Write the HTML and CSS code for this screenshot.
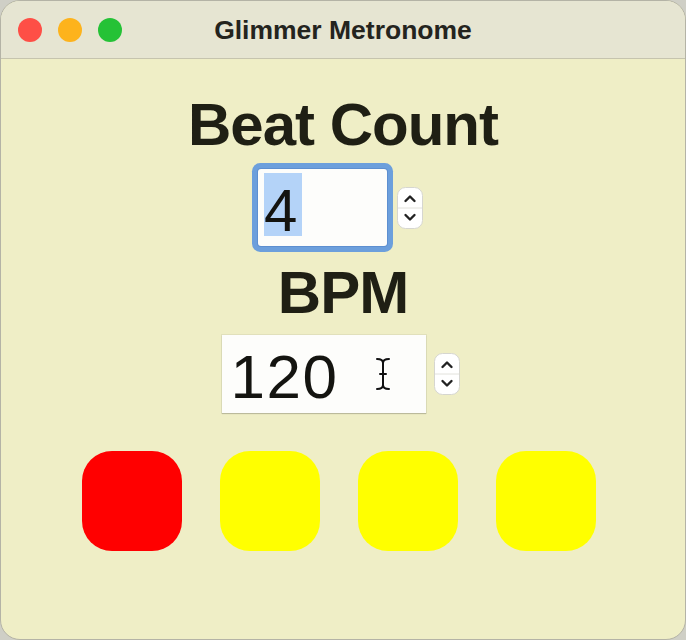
FILE: index.html
```html
<!DOCTYPE html>
<html>
<head>
<meta charset="utf-8">
<title>Glimmer Metronome</title>
<link rel="stylesheet" href="styles.css">
</head>
<body>
<div class="window">
  <div class="titlebar">
    <div class="lights">
      <span class="light red"></span>
      <span class="light yellow"></span>
      <span class="light green"></span>
    </div>
    <div class="title">Glimmer Metronome</div>
  </div>
  <div class="content">
    <h1 class="heading">Beat Count</h1>
    <div class="spin-row row-beats">
      <div class="field field-beats focused"><span class="value selected">4</span></div>
      <svg class="stepper" width="26" height="42" viewBox="0 0 26 42">
        <rect x="0.5" y="0.5" width="25" height="41" rx="8" fill="#fff" stroke="#d6d6d0"/>
        <line x1="1" y1="21" x2="25" y2="21" stroke="#e2e2dc"/>
        <polyline points="8.5,14 13,9.5 17.5,14" fill="none" stroke="#222" stroke-width="2.4" stroke-linecap="round" stroke-linejoin="round"/>
        <polyline points="8.5,28 13,32.5 17.5,28" fill="none" stroke="#222" stroke-width="2.4" stroke-linecap="round" stroke-linejoin="round"/>
      </svg>
    </div>
    <h1 class="heading bpm">BPM</h1>
    <div class="spin-row row-bpm">
      <div class="field field-bpm"><span class="value wide">120</span>
        <svg class="ibeam" width="16" height="34" viewBox="0 0 16 34">
          <path d="M2 2 C6 2 8 3 8 6 C8 3 10 2 14 2 M8 6 L8 28 M5 17 L11 17 M2 32 C6 32 8 31 8 28 C8 31 10 32 14 32" fill="none" stroke="#fff" stroke-width="4" stroke-linecap="round"/>
          <path d="M2 2 C6 2 8 3 8 6 C8 3 10 2 14 2 M8 6 L8 28 M5 17 L11 17 M2 32 C6 32 8 31 8 28 C8 31 10 32 14 32" fill="none" stroke="#111" stroke-width="2" stroke-linecap="round"/>
        </svg>
      </div>
      <svg class="stepper" width="26" height="42" viewBox="0 0 26 42">
        <rect x="0.5" y="0.5" width="25" height="41" rx="8" fill="#fff" stroke="#d6d6d0"/>
        <line x1="1" y1="21" x2="25" y2="21" stroke="#e2e2dc"/>
        <polyline points="8.5,14 13,9.5 17.5,14" fill="none" stroke="#222" stroke-width="2.4" stroke-linecap="round" stroke-linejoin="round"/>
        <polyline points="8.5,28 13,32.5 17.5,28" fill="none" stroke="#222" stroke-width="2.4" stroke-linecap="round" stroke-linejoin="round"/>
      </svg>
    </div>
    <div class="beats">
      <div class="beat on"></div>
      <div class="beat"></div>
      <div class="beat"></div>
      <div class="beat"></div>
    </div>
  </div>
</div>
</body>
</html>
```

FILE: styles.css
```css
html, body {
  margin: 0;
  padding: 0;
  background: #cfcfc6;
}

.window {
  box-sizing: border-box;
  width: 686px;
  height: 640px;
  border: 1px solid #b4b3a6;
  border-radius: 20px;
  overflow: hidden;
  background: #efeec6;
  font-family: "Liberation Sans", Arial, sans-serif;
}

.titlebar {
  height: 57px;
  border-bottom: 1px solid #c6c4ae;
  background: #e6e5d2;
  display: grid;
  align-items: center;
}

.lights,
.title {
  grid-area: 1 / 1;
}

.lights {
  display: flex;
  gap: 16px;
  padding-left: 17px;
  justify-self: start;
}

.light {
  width: 24px;
  height: 24px;
  border-radius: 50%;
}

.red { background: #fe4f46; }
.yellow { background: #fdb31c; }
.green { background: #25c236; }

.title {
  justify-self: center;
  font-size: 26.5px;
  line-height: 30px;
  font-weight: 700;
  color: #24241e;
}

.content {
  display: flex;
  flex-direction: column;
  align-items: center;
  padding-top: 36px;
}

.heading {
  margin: 0;
  font-size: 60px;
  line-height: 60px;
  font-weight: 700;
  letter-spacing: -1px;
  color: #1f1f14;
}

.heading.bpm {
  margin-top: 17px;
}

.spin-row {
  display: flex;
  align-items: center;
  padding-right: 5px;
}

.row-beats {
  margin-top: 14px;
  gap: 10px;
}

.row-bpm {
  margin-top: 12px;
  gap: 8px;
}

.field {
  position: relative;
  box-sizing: border-box;
  background: #fdfdfb;
  display: flex;
  align-items: flex-start;
  padding: 4px 0 0 6px;
  font-size: 60px;
  color: #141410;
}

.field-beats {
  width: 129px;
  height: 77px;
}

.field-bpm {
  width: 204px;
  height: 78px;
  padding-left: 9px;
  box-shadow: 0 0 0 1px rgba(120, 120, 110, 0.12), 0 1px 1px rgba(0, 0, 0, 0.18);
}

.focused {
  box-shadow: 0 0 0 1px #5d8fd0, 0 0 0 6px #6c9fdc;
  border-radius: 3px;
}

.value {
  display: block;
  box-sizing: border-box;
  height: 63px;
  padding-top: 12px;
  line-height: 51px;
}

.wide {
  font-size: 62px;
  letter-spacing: 1.5px;
}

.selected {
  width: 38px;
  background: #b4d3f8;
}

.ibeam {
  position: absolute;
  left: 153px;
  top: 22px;
}

.stepper {
  display: block;
}

.beats {
  display: flex;
  gap: 38px;
  margin-top: 38px;
  padding-right: 8px;
}

.beat {
  width: 100px;
  height: 100px;
  border-radius: 30px;
  background: #ffff00;
}

.beat.on {
  background: #ff0000;
}
```
